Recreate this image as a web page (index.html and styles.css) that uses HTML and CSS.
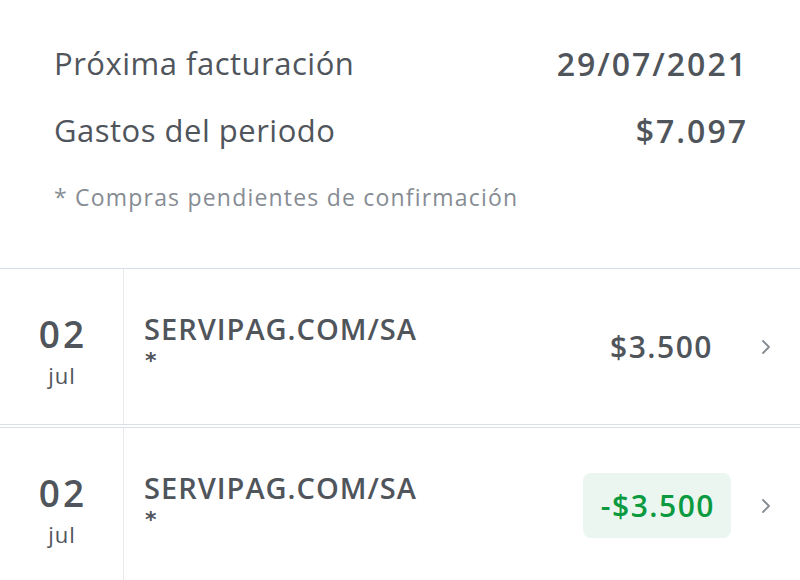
FILE: index.html
```html
<!DOCTYPE html>
<html lang="es">
<head>
    <meta charset="UTF-8">
    <meta name="viewport" content="width=device-width, initial-scale=1.0">
    <title>Movimientos</title>
    <link rel="stylesheet" href="styles.css">
</head>
<body>
    <div class="summary">
        <div class="summary-row">
            <span class="summary-label">Próxima facturación</span>
            <span class="summary-value">29/07/2021</span>
        </div>
        <div class="summary-row">
            <span class="summary-label">Gastos del periodo</span>
            <span class="summary-value">$7.097</span>
        </div>
        <p class="summary-note">* Compras pendientes de confirmación</p>
    </div>

    <ul class="movements">
        <li class="movement">
            <div class="movement-date">
                <span class="day">02</span>
                <span class="month">jul</span>
            </div>
            <div class="movement-body">
                <div class="merchant">
                    <div class="merchant-name">SERVIPAG.COM/SA</div>
                    <div class="merchant-mark">*</div>
                </div>
                <div class="amount">$3.500</div>
                <svg class="chevron" width="10" height="16" viewBox="0 0 10 16">
                    <path d="M2 2 L8 8 L2 14" fill="none" stroke="#868c94" stroke-width="1.8" stroke-linecap="round" stroke-linejoin="round"/>
                </svg>
            </div>
        </li>
        <li class="movement">
            <div class="movement-date">
                <span class="day">02</span>
                <span class="month">jul</span>
            </div>
            <div class="movement-body">
                <div class="merchant">
                    <div class="merchant-name">SERVIPAG.COM/SA</div>
                    <div class="merchant-mark">*</div>
                </div>
                <div class="amount credit">-$3.500</div>
                <svg class="chevron" width="10" height="16" viewBox="0 0 10 16">
                    <path d="M2 2 L8 8 L2 14" fill="none" stroke="#868c94" stroke-width="1.8" stroke-linecap="round" stroke-linejoin="round"/>
                </svg>
            </div>
        </li>
    </ul>
</body>
</html>
```

FILE: styles.css
```css
body {
    margin: 0;
    background-color: #fff;
    font-family: "Open Sans", "Noto Sans", sans-serif;
    color: #50555c;
}
.summary {
    padding: 43px 54px 56px 54px;
}
.summary-row {
    display: flex;
    justify-content: space-between;
    align-items: center;
    height: 40px;
    font-size: 31px;
}
.summary-row + .summary-row {
    margin-top: 27px;
}
.summary-label {
    letter-spacing: 0.5px;
}
.summary-value {
    font-weight: 600;
    font-size: 32px;
    letter-spacing: 2px;
    margin-right: -2px;
}
.summary-note {
    margin: 32px 0 0;
    line-height: 30px;
    font-size: 23px;
    letter-spacing: 1.2px;
    color: #868c94;
}
.movements {
    list-style: none;
    margin: 0;
    padding: 0;
}
.movement {
    display: flex;
    height: 155px;
    border-top: 1px solid #d8dfe7;
    border-bottom: 1px solid #d8dfe7;
    margin-bottom: 2px;
}
.movement-date {
    width: 124px;
    border-right: 1px solid #e6eaef;
    display: flex;
    flex-direction: column;
    align-items: center;
    padding-top: 45px;
    box-sizing: border-box;
}
.day {
    font-size: 37px;
    line-height: 40px;
    font-weight: 600;
    letter-spacing: 3px;
    margin-right: -3px;
}
.month {
    margin-top: 7px;
    font-size: 22px;
    line-height: 28px;
    letter-spacing: 1px;
    margin-right: -1px;
}
.movement-body {
    flex: 1;
    display: flex;
    align-items: center;
    padding-left: 20px;
}
.merchant {
    flex: 1;
    align-self: flex-start;
    margin-top: 45px;
}
.merchant-name {
    font-size: 29px;
    line-height: 30px;
    font-weight: 600;
    letter-spacing: 1px;
}
.merchant-mark {
    margin-top: 5px;
    padding-left: 1px;
    font-family: "DejaVu Sans", sans-serif;
    font-size: 22px;
    font-weight: bold;
    line-height: 24px;
}
.amount {
    padding: 0 18px;
    height: 65px;
    line-height: 65px;
    border-radius: 8px;
    font-size: 30px;
    font-weight: 600;
    letter-spacing: 1.5px;
}
.amount.credit {
    padding: 0 16px 0 18px;
    background-color: #eaf6ef;
    color: #0b9a3f;
}
.chevron {
    margin: 0 29px 0 30px;
}
```
